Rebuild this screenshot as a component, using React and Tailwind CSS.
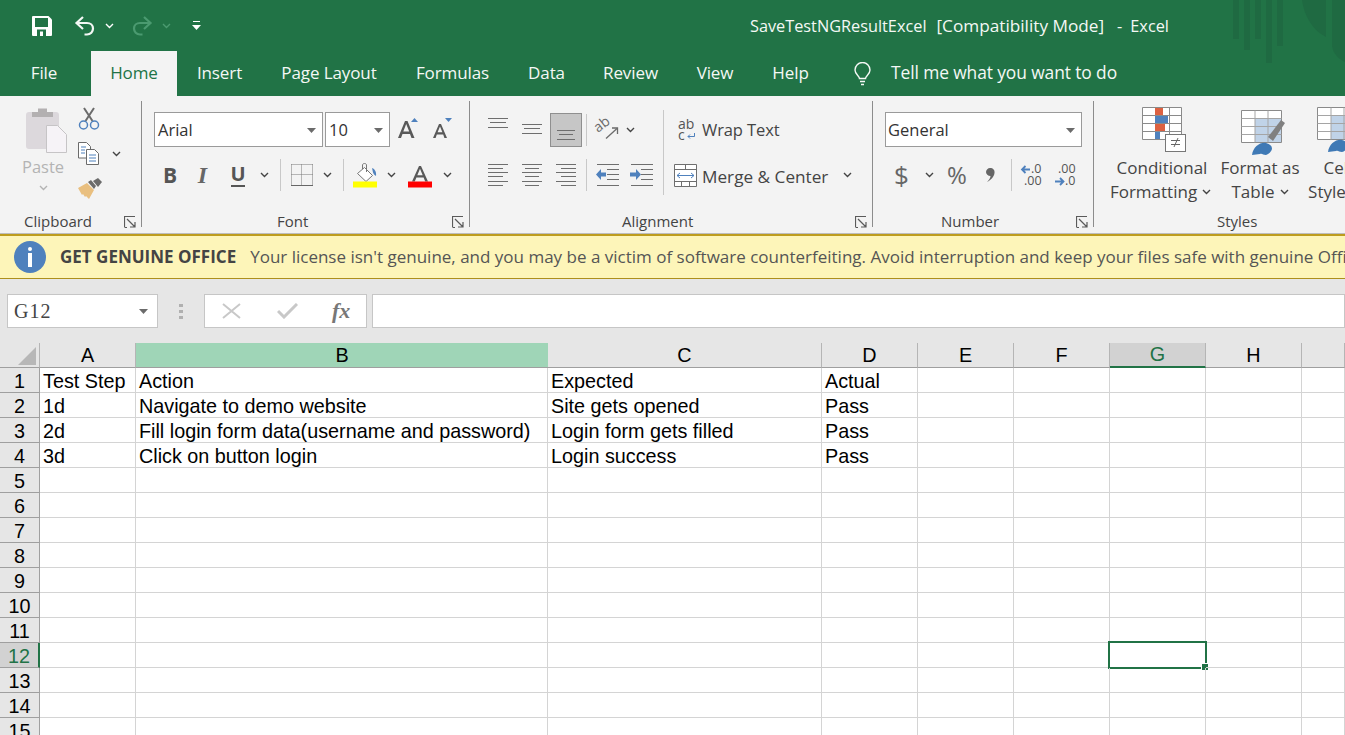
import React from "react";

const Chev = ({ c = "#444444", w = 9 }) => (
  <svg width={w} height="6" viewBox="0 0 9 6" className="block shrink-0">
    <path d="M1 1l3.500 3.500L8 1" stroke={c} strokeWidth="1.400" fill="none" />
  </svg>
);
const Caret = () => (
  <svg width="9" height="5" viewBox="0 0 9 5" className="block shrink-0"><path d="M0 0h9L4.500 5z" fill="#6b6b6b" /></svg>
);
const Launcher = () => (
  <svg width="12" height="12" viewBox="0 0 12 12" className="block shrink-0">
    <path d="M.5 11V.5H11M3 3l8 8M11 6v5H6M.5 11.500H3" stroke="#5a5a5a" strokeWidth="1.200" fill="none" />
  </svg>
);
const Lines = ({ w = 20, h = 35, l, c = "#6e6e6e" }) => (
  <svg width={w} height={h} viewBox={`0 0 ${w} ${h}`} className="block shrink-0">
    {l.map(([a, b, y], i) => (<path key={i} d={`M${a} ${y + 0.5}H${b}`} stroke={c} strokeWidth="1" />))}
  </svg>
);
const Sep = ({ h = "h-[32px]" }) => <div className={`w-px bg-[#c8c8c8] shrink-0 ${h}`} />;

function SaveIcon() {
  return (
    <svg width="20" height="20" viewBox="0 0 20 20" className="block">
      <path d="M1 0h15.500L20 3.500V19a1 1 0 0 1-1 1H1a1 1 0 0 1-1-1V1a1 1 0 0 1 1-1z" fill="#fff" />
      <path d="M3 2h13v9H3z" fill="#217346" />
      <path d="M5 13.500h9V20H5z" fill="#217346" />
      <path d="M8 15.500h3V20H8z" fill="#fff" />
    </svg>
  );
}
function UndoIcon({ c, flip }) {
  return (
    <svg width="22" height="20" viewBox="0 0 22 20" className={`block ${flip ? "-scale-x-100" : ""}`}>
      <path d="M2.500 7H13c3.500 0 6 2.300 6 5.500S16.500 18.500 13 18.500h-2.500" stroke={c} strokeWidth="2.200" fill="none" />
      <path d="M9 1L2.500 7 9 13" stroke={c} strokeWidth="2.200" fill="none" />
    </svg>
  );
}
function PasteIcon() {
  return (
    <svg width="42" height="46" viewBox="0 0 42 46" className="block">
      <rect x="0" y="5" width="33" height="37" rx="3" fill="#dcd8dc" />
      <path d="M6 5h6V1.500h9V5h6v5H6z" fill="#b3b0b1" />
      <path d="M20.500 18.500h11l9 9V45.500h-20z" fill="#f6f3f7" stroke="#c6c4c6" />
    </svg>
  );
}
function ScissorsIcon() {
  return (
    <svg width="22" height="23" viewBox="0 0 22 23" className="block">
      <path d="M6 1l8.500 13M16 1L7.500 14" stroke="#6b6b6b" strokeWidth="2" />
      <circle cx="5.500" cy="18" r="4" fill="none" stroke="#4f81bd" strokeWidth="1.500" />
      <circle cx="16.500" cy="18" r="4" fill="none" stroke="#4f81bd" strokeWidth="1.500" />
    </svg>
  );
}
function CopyIcon() {
  return (
    <svg width="21" height="23" viewBox="0 0 21 23" className="block">
      <path d="M.5.500h8l4 4V16H.5z" fill="#fff" stroke="#6b6b6b" />
      <path d="M8.500 7.500h8l4 4V22.500h-12z" fill="#fff" stroke="#6b6b6b" />
      <path d="M3 5h5M3 8h4M3 11h4M11 13h7M11 16h7M11 19h7" stroke="#4f81bd" />
    </svg>
  );
}
function BrushIcon() {
  return (
    <svg width="24" height="21" viewBox="0 0 24 21" className="block">
      <path d="M0 10l9-5 7 7-5 9-3-3-1 1-2-3-1 1z" fill="#e9bf7f" />
      <path d="M10 4l3-2 5 6-2 3z" fill="#6b6b6b" />
      <path d="M15 3l5-3 4 4-4 5z" fill="#6b6b6b" />
    </svg>
  );
}
function FillIcon() {
  return (
    <svg width="24" height="25" viewBox="0 0 24 25" className="block">
      <path d="M11.500 4.500l8 8-6.500 6-8.500-8z" fill="#fff" stroke="#777" />
      <path d="M9.500 6V2c0-2 4-2 4 0v7" stroke="#777" fill="none" />
      <path d="M19 5c3 1 4.500 4 4 8-1.500-1-2.500-2-3-3.500z" fill="#4f81bd" />
      <rect x="0" y="18.500" width="24" height="6" fill="#ffff00" />
    </svg>
  );
}
function FontColorIcon() {
  return (
    <svg width="24" height="25" viewBox="0 0 24 25" className="block">
      <path d="M4 18.500L11 3h2l7 15.500h-2.800l-1.600-4H8.400l-1.600 4zM9.300 12.300h5.400L12 5.800z" fill="#595959" />
      <rect x="0" y="18.500" width="24" height="6" fill="#ff0000" />
    </svg>
  );
}
function BorderIcon() {
  return (
    <svg width="22" height="22" viewBox="0 0 22 22" className="block">
      <path d="M.5.500h21M.5 10.500h21M.5.500v21M10.500.500v21M21.500.500v21" stroke="#777" strokeDasharray="1 1" fill="none" />
      <path d="M0 21.500h22" stroke="#666" />
    </svg>
  );
}
function Orient() {
  return (
    <svg width="22" height="20" viewBox="0 0 22 20" className="block overflow-visible">
      <path d="M9 18.500l11-10" stroke="#6b6b6b" strokeWidth="1.300" />
      <path d="M15 8h5.500v6" stroke="#6b6b6b" strokeWidth="1.300" fill="none" />
      <text x="1" y="13" transform="rotate(-38 1 13)" fontSize="14" fill="#6b6b6b" fontFamily="Open Sans">ab</text>
    </svg>
  );
}
function Indent({ rev }) {
  return (
    <svg width="23" height="22" viewBox="0 0 23 22" className="block">
      <path d="M1 .500h22M1 21.500h22M11 5.500h12M11 10.500h12M11 15.500h12" stroke="#6e6e6e" />
      {rev
        ? <path d="M0 8.500h6V5l5 5.500-5 5.500v-3.500H0z" fill="#4f81bd" />
        : <path d="M10 8.500H5V5L0 10.500 5 16v-3.500h5z" fill="#4f81bd" />}
    </svg>
  );
}
function MergeIcon() {
  return (
    <svg width="23" height="23" viewBox="0 0 23 23" className="block">
      <path d="M.5.500h22v22H.5zM.5 5.500h22M.5 17.500h22M11.500.500v5M7.500 17.500v5M15.500 17.500v5" stroke="#6e6e6e" fill="#fff" />
      <path d="M3 11.500h17M6 9l-3 2.500L6 14M17 9l3 2.500L17 14" stroke="#4f81bd" fill="none" />
    </svg>
  );
}
function WrapIcon() {
  return (
    <svg width="18" height="22" viewBox="0 0 18 22" className="block">
      <text x="0" y="10" fontSize="14" fill="#555" fontFamily="Open Sans">ab</text>
      <text x="0" y="21" fontSize="14" fill="#555" fontFamily="Open Sans">c</text>
      <path d="M16.500 14v3.500H10M12 15.500l-2 2 2 2" stroke="#4f81bd" fill="none" />
    </svg>
  );
}
function Decimal({ a, b, arrowTop }) {
  return (
    <svg width="24" height="24" viewBox="0 0 24 24" className="block">
      <text x={arrowTop ? 11 : 4} y="10" fontSize="12.500" fill="#555" fontFamily="Open Sans">{a}</text>
      <text x={arrowTop ? 4 : 11} y="22" fontSize="12.500" fill="#555" fontFamily="Open Sans">{b}</text>
      {arrowTop
        ? <path d="M10 6.500H2M5.500 3l-3.500 3.500 3.500 3.500" stroke="#4f81bd" strokeWidth="1.800" fill="none" />
        : <path d="M1 18.500h8M6 15l3.500 3.500L6 22" stroke="#4f81bd" strokeWidth="1.800" fill="none" />}
    </svg>
  );
}
function CondIcon() {
  return (
    <svg width="44" height="45" viewBox="0 0 44 45" className="block">
      <path d="M.5.500h39v32H.5zM.5 8.500h39M.5 16.500h39M.5 24.500h39M13.500.500v32M27.500.500v32" fill="#fff" stroke="#8a8a8a" />
      <rect x="13" y="1" width="8" height="7" fill="#dc6141" />
      <rect x="13" y="9" width="13" height="7" fill="#4f81bd" />
      <rect x="13" y="17" width="10" height="7" fill="#dc6141" />
      <rect x="13" y="25" width="5" height="7" fill="#4f81bd" />
      <rect x="23.500" y="27.500" width="20" height="17" fill="#fff" stroke="#777" />
      <path d="M29 33.500h9M29 37.500h9M36 31l-4 9" stroke="#666" fill="none" />
    </svg>
  );
}
function TableIcon({ clip }) {
  return (
    <svg width="44" height="46" viewBox="0 0 44 46" className="block">
      <path d="M.5.500h40v32H.5z" fill="#fff" stroke="#8a8a8a" />
      <path d="M14 9h26v23H14z" fill="#c0d3e8" />
      <path d="M.5 8.500h40M.5 16.500h40M.5 24.500h40M14 .500v32M27 .500v32" stroke="#a5a5a5" fill="none" />
      {!clip && <path d="M27 27l13-17 4 3-12 18z" fill="#808080" />}
      <path d="M11 45c1-8 8-13 14-12 4 1 6 3 6 6-1 3-3 5-6 6-3 0-4-2-6-1z" fill="#3f79b5" />
    </svg>
  );
}

const Tab = ({ w, children }) => (
  <div className={`${w} text-center text-[#f4f8f5] shrink-0`}>{children}</div>
);

const cols = ["A", "B", "C", "D", "E", "F", "G", "H", ""];
const rows = [
  ["Test Step", "Action", "Expected", "Actual"],
  ["1d", "Navigate to demo website", "Site gets opened", "Pass"],
  ["2d", "Fill login form data(username and password)", "Login form gets filled", "Pass"],
  ["3d", "Click on button login", "Login success", "Pass"],
];
const nums = Array.from({ length: 15 }, (_, i) => i + 1);

export default function App() {
  return (
    <div className="w-[1345px] h-[735px] overflow-hidden bg-white font-['Open_Sans',sans-serif] relative">
      {/* title bar */}
      <div className="relative bg-[#217346] h-[96px] overflow-hidden">
        <svg width="115" height="66" viewBox="0 0 115 66" className="absolute top-0 right-0">
          <g fill="#1f6a42">
            <rect x="3" y="0" width="6" height="39" />
            <rect x="14" y="0" width="6" height="50" />
            <rect x="25" y="0" width="6" height="39" />
            <rect x="36" y="0" width="6" height="63" />
            <rect x="47" y="0" width="6" height="46" />
            <path d="M72 0h24v37C82 30 74 15 72 0z" />
            <path d="M102 0h13v62c-8-4-13-10-13-18z" />
          </g>
        </svg>
        <div className="relative flex items-center h-[51px]">
          <div className="w-[750px] shrink-0 flex items-center pl-[32px]">
            <SaveIcon />
            <div className="ml-[22px]"><UndoIcon c="#f4f8f5" /></div>
            <div className="ml-[9px]"><Chev c="#ffffff" /></div>
            <div className="ml-[17px]"><UndoIcon c="#4b9a70" flip /></div>
            <div className="ml-[9px]"><Chev c="#4b9a70" /></div>
            <svg width="9" height="10" viewBox="0 0 9 10" className="ml-[21px] block">
              <path d="M1 .500h7" stroke="#fff" /><path d="M0 4h9L4.500 9z" fill="#fff" />
            </svg>
          </div>
          <div className="pt-[1px] flex items-baseline text-[16.300px] text-[#f4f8f5] whitespace-nowrap">
            <span>SaveTestNGResultExcel</span>
            <span className="ml-[10px] text-[17.200px]">[Compatibility Mode]</span>
            <span className="ml-[13px]">-</span>
            <span className="ml-[8px]">Excel</span>
          </div>
        </div>
        <div className="relative flex h-[45px] items-center text-[17px] tracking-[-0.1px]">
          <Tab w="w-[91px] pr-[3px] pb-[2px]">File</Tab>
          <div className="w-[86px] h-full pb-[2px] bg-[#f3f3f3] text-[#217346] flex items-center justify-center shrink-0">Home</div>
          <Tab w="w-[85px] pb-[2px]">Insert</Tab>
          <Tab w="w-[134px] pb-[2px]">Page Layout</Tab>
          <Tab w="w-[113px] pb-[2px]">Formulas</Tab>
          <Tab w="w-[75px] pb-[2px]">Data</Tab>
          <Tab w="w-[93px] pb-[2px]">Review</Tab>
          <Tab w="w-[76px] pb-[2px]">View</Tab>
          <Tab w="w-[75px] pb-[2px]">Help</Tab>
          <svg width="17" height="24" viewBox="0 0 17 24" className="ml-[26px] block shrink-0">
            <path d="M5.500 16.500c0-2.500-4.500-4-4.500-8.500a7.500 7.500 0 0 1 15 0c0 4.500-4.500 6-4.500 8.500zM6 19.500h5M7 22.500h3" stroke="#f4f8f5" strokeWidth="1.400" fill="none" />
          </svg>
          <div className="ml-[20px] pb-[2px] text-[17.400px] text-[#f4f8f5] whitespace-nowrap">Tell me what you want to do</div>
        </div>
      </div>

      {/* ribbon */}
      <div className="flex h-[138px] bg-[#f3f3f3] pt-[5px] border-b border-[#bdbdbd] text-[#444444]">
        {/* Clipboard */}
        <div className="w-[142px] h-[126px] shrink-0 border-r border-[#8c8c8c] flex flex-col">
          <div className="h-[113px] shrink-0 flex">
            <div className="w-[78px] pl-[26px] pt-[6px] flex flex-col">
              <PasteIcon />
              <div className="w-[34px] flex justify-center text-[16.500px] leading-[20px] mt-[4px] text-[#b3b3b3]">Paste</div>
              <div className="w-[34px] flex justify-center mt-[8px]"><Chev c="#b3b3b3" /></div>
            </div>
            <div className="flex flex-col pt-[6px]">
              <ScissorsIcon />
              <div className="flex items-center mt-[12px]"><CopyIcon /><div className="ml-[13px]"><Chev /></div></div>
              <div className="mt-[13px]"><BrushIcon /></div>
            </div>
          </div>
          <div className="h-[15px] pl-[24px] pr-[5px] flex items-center justify-between text-[15px]"><span>Clipboard</span><Launcher /></div>
        </div>

        {/* Font */}
        <div className="w-[328px] h-[126px] shrink-0 border-r border-[#8c8c8c] flex flex-col">
          <div className="h-[113px] shrink-0 pt-[11px] pl-[12px]">
            <div className="flex items-center h-[35px]">
              <div className="w-[169px] h-[35px] bg-white border border-[#9a9a9a] flex items-center justify-between pl-[3px] pr-[6px] pt-[1px] text-[16.500px] text-[#333333]">Arial<Caret /></div>
              <div className="ml-[2px] w-[65px] h-[35px] bg-white border border-[#9a9a9a] flex items-center justify-between pl-[3px] pr-[6px] pt-[1px] text-[16.500px] text-[#333333]">10<Caret /></div>
              <svg width="21" height="21" viewBox="0 0 21 21" className="ml-[8px] mt-[-3px] block shrink-0">
                <path d="M0 20L7 3h2.500l7 17h-3l-1.500-4H4.500L3 20zM5.300 13.500h5.900L8.200 6z" fill="#595959" /><path d="M13 4l3.500-4L20 4z" fill="#4f81bd" />
              </svg>
              <svg width="20" height="21" viewBox="0 0 20 21" className="ml-[14px] mt-[-3px] block shrink-0">
                <path d="M0 20L6 6h2l6 14h-2.600l-1.200-3.500H3.800L2.600 20zM4.600 14.300h4.800L7 8.500z" fill="#595959" /><path d="M12 0h7l-3.500 4z" fill="#4f81bd" />
              </svg>
            </div>
            <div className="flex items-center h-[34px] mt-[11px]">
              <div className="w-[32px] text-center text-[21px] font-bold text-[#555555] leading-none">B</div>
              <div className="w-[33px] text-center text-[24px] italic font-bold text-[#666666] leading-none font-['Liberation_Serif',serif]">I</div>
              <div className="w-[38px] flex justify-center">
                <div className="text-[20px] font-bold text-[#555555] leading-[22px] border-b-2 border-[#555555] w-[14px] flex justify-center">U</div>
              </div>
              <div className="w-[23px] flex justify-start pl-[3px]"><Chev /></div>
              <Sep />
              <div className="w-[41px] flex justify-center"><BorderIcon /></div>
              <div className="w-[21px] flex justify-start pl-[1px]"><Chev /></div>
              <Sep />
              <div className="w-[37px] flex justify-center pl-[4px]"><FillIcon /></div>
              <div className="w-[18px] flex justify-center pl-[2px]"><Chev /></div>
              <div className="w-[42px] flex justify-center"><FontColorIcon /></div>
              <div className="w-[12px] flex justify-center"><Chev /></div>
            </div>
          </div>
          <div className="h-[15px] pl-[135px] pr-[5px] flex items-center justify-between text-[15px]"><span>Font</span><Launcher /></div>
        </div>

        {/* Alignment */}
        <div className="w-[403px] h-[126px] shrink-0 border-r border-[#8c8c8c] flex flex-col">
          <div className="h-[113px] shrink-0 pt-[11px] pl-[18px] flex">
            <div className="w-[175px] shrink-0">
              <div className="flex items-center h-[35px]">
                <Lines l={[[0, 20, 6], [2, 18, 10], [0, 20, 15]]} />
                <div className="ml-[14px]"><Lines l={[[0, 20, 12], [2, 18, 16], [0, 20, 21]]} /></div>
                <div className="ml-[8px] w-[32px] h-[34px] bg-[#c6c6c6] border border-[#8f8f8f] flex items-center justify-center">
                  <Lines w={20} h={32} l={[[1, 19, 16], [3, 17, 20], [1, 19, 25]]} />
                </div>
                <div className="ml-[4px]"><Sep /></div>
                <div className="ml-[10px]"><Orient /></div>
                <div className="ml-[7px]"><Chev /></div>
              </div>
              <div className="flex items-center h-[34px] mt-[11px]">
                <Lines h={22} l={[[0, 20, 0], [0, 15, 4], [0, 20, 8], [0, 15, 12], [0, 20, 17], [0, 15, 21]]} />
                <div className="ml-[14px]"><Lines h={22} l={[[0, 20, 0], [3, 17, 4], [0, 20, 8], [3, 17, 12], [0, 20, 17], [3, 17, 21]]} /></div>
                <div className="ml-[14px]"><Lines h={22} l={[[0, 20, 0], [5, 20, 4], [0, 20, 8], [5, 20, 12], [0, 20, 17], [5, 20, 21]]} /></div>
                <div className="ml-[10px]"><Sep /></div>
                <div className="ml-[9px]"><Indent /></div>
                <div className="ml-[11px]"><Indent rev /></div>
              </div>
            </div>
            <Sep h="h-[85px] mt-[-2px]" />
            <div className="pl-[10px]">
              <div className="flex items-center h-[35px] text-[16.500px] tracking-[-0.1px] text-[#444444]">
                <div className="ml-[4px]"><WrapIcon /></div>
                <span className="ml-[6px] pt-[2px]">Wrap Text</span>
              </div>
              <div className="flex items-center h-[34px] mt-[11px] text-[17.200px] text-[#444444]">
                <MergeIcon />
                <span className="ml-[5px] pt-[3px]">Merge &amp; Center</span>
                <div className="ml-[15px]"><Chev /></div>
              </div>
            </div>
          </div>
          <div className="h-[15px] pl-[152px] pr-[5px] flex items-center justify-between text-[15px]"><span>Alignment</span><Launcher /></div>
        </div>

        {/* Number */}
        <div className="w-[221px] h-[126px] shrink-0 border-r border-[#8c8c8c] flex flex-col">
          <div className="h-[113px] shrink-0 pt-[11px] pl-[12px]">
            <div className="w-[197px] h-[35px] bg-white border border-[#9a9a9a] flex items-center justify-between pl-[2px] pr-[6px] pt-[1px] text-[16.500px] text-[#333333]">General<Caret /></div>
            <div className="flex items-center h-[34px] mt-[11px]">
              <div className="w-[33px] pl-[9px] text-[26px] text-[#666666] leading-none">$</div>
              <div className="w-[20px] flex justify-center pl-[2px]"><Chev /></div>
              <div className="w-[38px] text-center text-[24px] text-[#666666] leading-none">%</div>
              <div className="w-[35px] flex justify-start pl-[10px]">
                <svg width="9" height="14" viewBox="0 0 9 14" className="block"><path d="M4 0c3 0 5 2 4.500 5C8 9 5 12 1 14c2-2 3.500-4 3.500-6C2 8 0 6 0 4s2-4 4-4z" fill="#666" /></svg>
              </div>
              <Sep />
              <div className="ml-[8px]"><Decimal a=".0" b=".00" arrowTop /></div>
              <div className="ml-[10px]"><Decimal a=".00" b=".0" /></div>
            </div>
          </div>
          <div className="h-[15px] pl-[68px] pr-[5px] flex items-center justify-between text-[15px]"><span>Number</span><Launcher /></div>
        </div>

        {/* Styles */}
        <div className="flex-1 h-[126px] flex flex-col">
          <div className="h-[113px] shrink-0 pl-[18px] flex text-[17px] leading-[24px] text-[#444444]">
            <div className="w-[100px] shrink-0 flex flex-col items-center pt-[6px]">
              <div className="ml-[4px]"><CondIcon /></div>
              <div className="mt-[4px]">Conditional</div>
              <div className="flex items-center gap-[5px] whitespace-nowrap mr-[3px]">Formatting<Chev /></div>
            </div>
            <div className="w-[96px] shrink-0 flex flex-col items-center pt-[6px]">
              <div className="ml-[6px] mt-[3px] mb-[-4px]"><TableIcon /></div>
              <div className="mt-[4px]">Format as</div>
              <div className="flex items-center gap-[5px]">Table<Chev /></div>
            </div>
            <div className="w-[60px] shrink-0 flex flex-col items-center pt-[6px]">
              <div className="ml-[2px] mb-[-1px]"><TableIcon clip /></div>
              <div className="mt-[4px]">Cell</div>
              <div className="flex items-center gap-[5px] whitespace-nowrap">Styles<Chev /></div>
            </div>
          </div>
          <div className="h-[15px] pl-[123px] flex items-center text-[15px]"><span>Styles</span></div>
        </div>
      </div>

      {/* notice */}
      <div className="h-[45px] bg-[#fdf5b9] border-t-2 border-b border-t-[#bd9c1e] border-b-[#ad8f1c] flex items-center pl-[14px] whitespace-nowrap text-[17px] text-[#555555]">
        <div className="w-[32px] h-[32px] rounded-full bg-[#4f81bd] flex items-center justify-center shrink-0">
          <svg width="6" height="20" viewBox="0 0 6 20" className="block"><circle cx="3" cy="2" r="2" fill="#fff" /><rect x="1" y="6" width="4" height="14" fill="#fff" /></svg>
        </div>
        <span className="ml-[14px] font-bold text-[#444444] text-[17px]">GET GENUINE OFFICE</span>
        <span className="ml-[14px]">Your license isn't genuine, and you may be a victim of software counterfeiting. Avoid interruption and keep your files safe with genuine Office today.</span>
      </div>

      {/* formula bar */}
      <div className="h-[64px] bg-[#e6e6e6] pt-[15px] pl-[7px] flex items-start">
        <div className="w-[151px] h-[34px] bg-white border border-[#c6c6c6] flex items-center justify-between pl-[6px] pr-[9px] text-[20px] text-[#444444] tracking-[1px] font-['Liberation_Serif',serif]">G12<Caret /></div>
        <div className="w-[46px] h-[34px] flex items-center justify-center">
          <svg width="4" height="15" viewBox="0 0 4 15" className="block"><path d="M0 0h4v3H0zM0 6h4v3H0zM0 12h4v3H0z" fill="#b0b0b0" /></svg>
        </div>
        <div className="w-[163px] h-[34px] bg-white border border-[#c6c6c6] flex items-center pl-[17px]">
          <svg width="19" height="16" viewBox="0 0 19 16" className="block"><path d="M1 1l17 14M18 1L1 15" stroke="#c8c8c8" strokeWidth="2" /></svg>
          <svg width="21" height="16" viewBox="0 0 21 16" className="block ml-[36px]"><path d="M1 8l6 6L20 1" stroke="#c8c8c8" strokeWidth="3" fill="none" /></svg>
          <span className="ml-[34px] text-[22px] italic font-bold text-[#777777] font-['Liberation_Serif',serif] leading-none">fx</span>
        </div>
        <div className="ml-[5px] flex-1 h-[34px] bg-white border border-[#c6c6c6]" />
      </div>

      {/* sheet */}
      <div className="grid grid-cols-[40px_96px_412px_274px_96px_96px_96px_96px_96px_1fr] font-['Liberation_Sans',Arial,sans-serif] text-[19.800px] text-black">
        <div className="h-[25px] bg-[#e6e6e6] border-b border-r border-b-[#9f9f9f] border-r-[#b5b5b5] flex items-end justify-end pr-[3px] pb-[2px]">
          <svg width="18" height="18" viewBox="0 0 18 18" className="block"><path d="M18 0v18H0z" fill="#b7b7b7" /></svg>
        </div>
        {cols.map((c) => (
          c === "B" ? (
            <div key={c} className="h-[25px] pt-[1px] bg-[#9fd5b7] border-b border-b-[#9f9f9f] flex items-center justify-center">{c}</div>
          ) : c === "G" ? (
            <div key={c} className="h-[25px] pt-[1px] bg-[#d2d2d2] border-b-2 border-b-[#217346] border-r border-r-[#b5b5b5] text-[#217346] flex items-center justify-center">{c}</div>
          ) : (
            <div key={c + "h"} className="h-[25px] pt-[1px] bg-[#e6e6e6] border-b border-r border-b-[#9f9f9f] border-r-[#b5b5b5] flex items-center justify-center">{c}</div>
          )
        ))}
        {nums.map((n) => (
          <React.Fragment key={n}>
            {n === 12 ? (
              <div className="h-[25px] pt-[3px] bg-[#d2d2d2] border-b border-r-2 border-b-[#9f9f9f] border-r-[#217346] text-[#217346] flex items-center justify-center">{n}</div>
            ) : (
              <div className="h-[25px] pt-[3px] bg-[#e6e6e6] border-b border-r border-b-[#9f9f9f] border-r-[#a0a0a0] flex items-center justify-center">{n}</div>
            )}
            {cols.map((c, i) => (
              <div key={i} className="h-[25px] pt-[3px] relative border-b border-r border-[#d4d4d4] pl-[3px] flex items-center whitespace-nowrap">
                {rows[n - 1] ? rows[n - 1][i] : ""}
                {n === 12 && c === "G" && (
                  <div className="absolute left-[-2px] top-[-2px] w-[99px] h-[28px] border-2 border-[#217346]">
                    <div className="absolute right-[-4px] bottom-[-4px] w-[6px] h-[6px] bg-[#217346] border border-white box-content" />
                  </div>
                )}
              </div>
            ))}
          </React.Fragment>
        ))}
      </div>
    </div>
  );
}
